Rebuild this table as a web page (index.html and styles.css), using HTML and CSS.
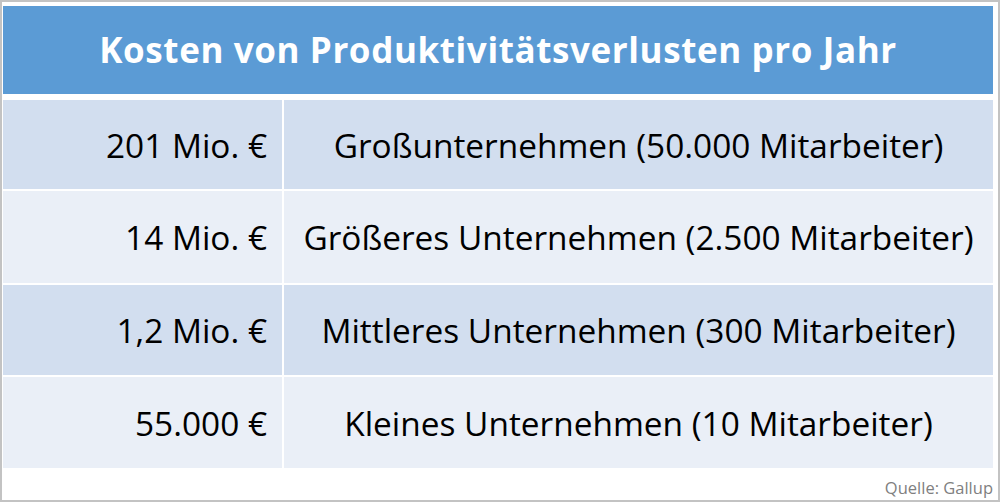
FILE: index.html
```html
<!DOCTYPE html>
<html lang="de">
<head>
<meta charset="utf-8">
<link rel="stylesheet" href="styles.css">
<title>Kosten von Produktivitätsverlusten pro Jahr</title>
</head>
<body>
<div class="frame">
  <div class="table">
    <div class="head">Kosten von Produktivitätsverlusten pro Jahr</div>
    <div class="cell num odd">201 Mio. €</div>
    <div class="cell desc odd">Großunternehmen (50.000 Mitarbeiter)</div>
    <div class="cell num even">14 Mio. €</div>
    <div class="cell desc even">Größeres Unternehmen (2.500 Mitarbeiter)</div>
    <div class="cell num odd">1,2 Mio. €</div>
    <div class="cell desc odd">Mittleres Unternehmen (300 Mitarbeiter)</div>
    <div class="cell num even">55.000 €</div>
    <div class="cell desc even">Kleines Unternehmen (10 Mitarbeiter)</div>
  </div>
  <div class="source">Quelle: Gallup</div>
</div>
</body>
</html>
```

FILE: styles.css
```css
html, body {
  margin: 0;
  padding: 0;
  background: #ffffff;
}
.frame {
  width: 1000px;
  height: 502px;
  box-sizing: border-box;
  border: 2px solid #c3c3c3;
  padding: 4px 5px 0 1px;
  font-family: "Open Sans", "Noto Sans", sans-serif;
  display: flex;
  flex-direction: column;
}
.table {
  display: grid;
  grid-template-columns: 279px 709px;
  grid-template-rows: 92px 89px 92px 90px 91px;
  column-gap: 2px;
  row-gap: 2px;
}
.head {
  grid-column: 1 / 3;
  background: #5b9bd5;
  color: #ffffff;
  font-weight: 700;
  font-size: 35px;
  letter-spacing: 0.6px;
  display: flex;
  align-items: center;
  justify-content: center;
  margin-bottom: 4px;
  padding-bottom: 2px;
}
.cell {
  display: flex;
  align-items: center;
  color: #000000;
  font-size: 33.4px;
}
.odd { background: #d2deef; }
.even { background: #eaeff7; }
.num {
  justify-content: flex-end;
  padding-right: 15px;
}
.desc {
  justify-content: center;
}
.source {
  margin-top: auto;
  text-align: right;
  color: #7f7f7f;
  font-size: 16.5px;
  padding-bottom: 1px;
}
```
